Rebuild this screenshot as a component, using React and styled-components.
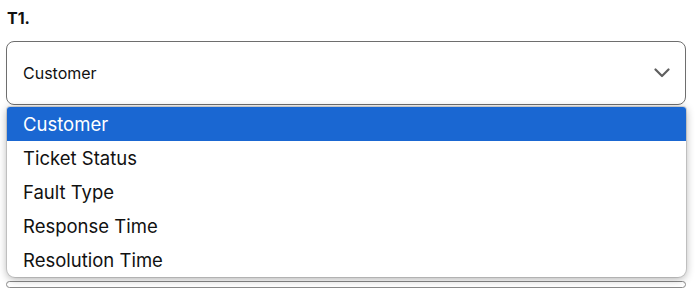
import React, { useState } from 'react'
import styled, { createGlobalStyle } from 'styled-components'

const GlobalStyle = createGlobalStyle`
  html, body {
    margin: 0;
    padding: 0;
    background: #ffffff;
    font-family: Inter, "Liberation Sans", sans-serif;
    overflow: hidden;
  }
`

const options = ['Customer', 'Ticket Status', 'Fault Type', 'Response Time', 'Resolution Time']

const ChevronDown = () => (
  <svg width="16" height="10" viewBox="0 0 16 10" fill="none">
    <path d="M1.5 1.5 L8 8 L14.5 1.5" stroke="#5f5f5f" strokeWidth="2.2" strokeLinecap="round" strokeLinejoin="round" />
  </svg>
)

const App = () => {
  const [value] = useState('Customer')
  return (
    <>
      <GlobalStyle />
      <Page>
        <Field>
          <Label>T1.</Label>
          <SelectWrap>
            <SelectBox>
              <span>{value}</span>
              <ChevronDown />
            </SelectBox>
            <Menu>
              {options.map((o) => (
                <Option key={o} $active={o === value}>{o}</Option>
              ))}
            </Menu>
          </SelectWrap>
        </Field>
        <NextCard />
      </Page>
    </>
  )
}

export default App

const Page = styled.div`
  padding: 8px 13px 0 6px;
  display: flex;
  flex-direction: column;
  height: 288px;
  box-sizing: border-box;
`

const Field = styled.div`
  display: flex;
  flex-direction: column;
`

const Label = styled.div`
  font-size: 16px;
  font-weight: 700;
  line-height: 20px;
  color: #111111;
  padding-left: 1px;
  margin-bottom: 13px;
`

const SelectWrap = styled.div`
  position: relative;
`

const SelectBox = styled.div`
  box-sizing: border-box;
  height: 64px;
  border: 1px solid #6e6e6e;
  border-radius: 8px;
  padding: 0 15px 0 16px;
  display: flex;
  align-items: center;
  justify-content: space-between;
  font-size: 16px;
  color: #111111;
  background: #ffffff;
  box-shadow: 0 6px 8px -4px rgba(0, 0, 0, 0.08);
`

const NextCard = styled.div`
  margin-top: 176px;
  height: 40px;
  border: 1px solid #8a8a8a;
  border-radius: 8px;
  background: #ffffff;
`

const Menu = styled.div`
  position: absolute;
  top: 66px;
  left: 1px;
  right: 0;
  background: #ffffff;
  border-radius: 3px 3px 8px 8px;
  box-shadow: 0 2px 8px rgba(0, 0, 0, 0.32), 0 0 0 1px rgba(0, 0, 0, 0.12);
  overflow: hidden;
  z-index: 10;
`

const Option = styled.div`
  height: 34px;
  line-height: 34px;
  padding-left: 16px;
  font-size: 18.5px;
  color: ${(p) => (p.$active ? '#ffffff' : '#111111')};
  background: ${(p) => (p.$active ? '#1a67d2' : 'transparent')};
`
